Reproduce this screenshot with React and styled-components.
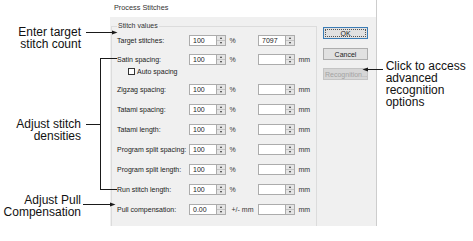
import React from 'react';
import styled, { createGlobalStyle } from 'styled-components';

const GlobalStyle = createGlobalStyle`
  html, body {
    margin: 0;
    padding: 0;
    background: #fff;
  }
  body {
    font-family: 'Liberation Sans', Arial, sans-serif;
  }
`;

const rows = [
  { label: 'Satin spacing:', gap: 7 },
  { label: 'Zigzag spacing:', gap: 7 },
  { label: 'Tatami spacing:' },
  { label: 'Tatami length:' },
  { label: 'Program split spacing:' },
  { label: 'Program split length:' },
  { label: 'Run stitch length:' },
];

const Spinner = ({ value }) => (
  <Spin>
    <Box>{value}</Box>
    <Arrows>
      <Half><Tri /></Half>
      <Half><Tri $down /></Half>
    </Arrows>
  </Spin>
);

const StitchRow = ({ label, gap }) => (
  <Row $gap={gap}>
    <RowLabel>{label}</RowLabel>
    <Spinner value="100" />
    <Unit $w={32}>%</Unit>
    <Spinner />
    <Unit>mm</Unit>
  </Row>
);

const App = () => {
  return (
    <Page>
      <GlobalStyle />
      <LeftNotes>
        <Note $top={26.3}>Enter target<br />stitch count</Note>
        <Note $top={67.7}>Adjust stitch<br />densities</Note>
        <Note $top={52}>Adjust Pull<br />Compensation</Note>
      </LeftNotes>

      <Dialog>
        <TitleBar>Process Stitches</TitleBar>
        <Body>
          <Group>
            <Legend>Stitch values</Legend>
            <Row $gap={4}>
              <RowLabel>Target stitches:</RowLabel>
              <Spinner value="100" />
              <Unit $w={32}>%</Unit>
              <Spinner value="7097" />
            </Row>
            <StitchRow {...rows[0]} />
            <CheckRow>
              <Check />
              <CheckLabel>Auto spacing</CheckLabel>
            </CheckRow>
            {rows.slice(1).map((r) => (
              <StitchRow key={r.label} {...r} />
            ))}
            <Row>
              <RowLabel>Pull compensation:</RowLabel>
              <Spinner value="0.00" />
              <Unit $w={32} $pad={5.5}>+/- mm</Unit>
              <Spinner />
              <Unit>mm</Unit>
            </Row>
          </Group>

          <Buttons>
            <Button $focus>OK</Button>
            <Button $mt={9}>Cancel</Button>
            <Button $mt={8} disabled>Recognition...</Button>
          </Buttons>
        </Body>
      </Dialog>

      <RightNote>Click to access<br />advanced<br />recognition<br />options</RightNote>

      <Callouts width="473" height="241" viewBox="0 0 473 241">
        <g stroke="#1a1a1a" strokeWidth="1" fill="none">
          <path d="M86 32.5 H113" />
          <path d="M86 124.5 H100.5 M100.5 58.5 V190 M100 58.5 H117 M100 189.5 H117" />
          <path d="M83 204.5 H111" />
          <path d="M367 69.5 H383" />
        </g>
        <g fill="#1a1a1a">
          <polygon points="117.5,32.5 112,30.5 112,34.5" />
          <polygon points="115.5,204.5 110,202.5 110,206.5" />
          <polygon points="362.5,69.5 368,67.5 368,71.5" />
        </g>
      </Callouts>
    </Page>
  );
};

// Styled-components
const Page = styled.div`
  position: relative;
  display: flex;
  align-items: flex-start;
  width: 473px;
  height: 241px;
  overflow: hidden;
  background: #fff;
`;

const LeftNotes = styled.div`
  flex: 0 0 110px;
  display: flex;
  flex-direction: column;
`;

const Note = styled.div`
  margin-top: ${(p) => p.$top}px;
  padding-right: 29px;
  text-align: right;
  font-size: 12px;
  line-height: 12px;
  color: #111;
`;

const Dialog = styled.div`
  box-sizing: border-box;
  flex: 0 0 267px;
  display: flex;
  flex-direction: column;
  border-right: 1px solid #cdcdcd;
`;

const TitleBar = styled.div`
  height: 17px;
  box-sizing: border-box;
  padding: 3px 0 0 4px;
  background: #fff;
  font-size: 7.3px;
  line-height: 9px;
  color: #333;
`;

const Body = styled.div`
  height: 209px;
  display: flex;
  align-items: flex-start;
  padding-left: 1px;
  background: #f0f0f0;
  overflow: hidden;
`;

const Group = styled.fieldset`
  box-sizing: border-box;
  width: 206px;
  height: 215px;
  min-width: 0;
  margin: 5px 0 0 0;
  padding: 0 0 0 5px;
  border: 1px solid #dcdcdc;
  display: flex;
  flex-direction: column;
`;

const Legend = styled.legend`
  padding: 0 1px;
  font-size: 7px;
  line-height: 8px;
  color: #333;
`;

const Row = styled.div`
  display: flex;
  align-items: center;
  height: 12px;
  margin-top: ${(p) => (p.$gap !== undefined ? p.$gap : 8)}px;
`;

const RowLabel = styled.span`
  flex: 0 0 72px;
  font-size: 7px;
  color: #222;
  white-space: nowrap;
`;

const Spin = styled.div`
  display: flex;
  flex: 0 0 37px;
  height: 11px;
`;

const Box = styled.div`
  box-sizing: border-box;
  width: 28px;
  height: 11px;
  padding-left: 3px;
  border: 1px solid #acacac;
  background: #fff;
  font-size: 7px;
  line-height: 9px;
  color: #222;
`;

const Arrows = styled.div`
  box-sizing: border-box;
  width: 9px;
  height: 11px;
  border: 1px solid #acacac;
  border-left: none;
  background: #e4e4e4;
  display: flex;
  flex-direction: column;
`;

const Half = styled.div`
  flex: 1;
  display: flex;
  align-items: center;
  justify-content: center;
  & + & {
    border-top: 1px solid #c4c4c4;
  }
`;

const Tri = styled.span`
  width: 0;
  height: 0;
  border-left: 1.5px solid transparent;
  border-right: 1.5px solid transparent;
  ${(p) =>
    p.$down
      ? 'border-top: 2px solid #333;'
      : 'border-bottom: 2px solid #333;'}
`;

const Unit = styled.span`
  flex: 0 0 ${(p) => (p.$w ? `${p.$w}px` : 'auto')};
  box-sizing: border-box;
  padding-left: ${(p) => p.$pad || 3.5}px;
  font-size: 7px;
  color: #333;
  white-space: nowrap;
`;

const CheckRow = styled.div`
  display: flex;
  align-items: center;
  height: 10px;
  margin-top: 1px;
  padding-left: 11px;
`;

const Check = styled.span`
  box-sizing: border-box;
  width: 7px;
  height: 7px;
  border: 1px solid #333;
  background: #fff;
`;

const CheckLabel = styled.span`
  margin-left: 2px;
  font-size: 7px;
  color: #222;
`;

const Buttons = styled.div`
  display: flex;
  flex-direction: column;
  margin: 10px 0 0 6px;
`;

const Button = styled.button`
  position: relative;
  box-sizing: border-box;
  width: 45px;
  height: 12px;
  margin: ${(p) => p.$mt || 0}px 0 0 0;
  padding: 0 1px;
  display: flex;
  align-items: center;
  justify-content: safe center;
  overflow: hidden;
  white-space: nowrap;
  font-family: 'Liberation Sans', Arial, sans-serif;
  font-size: 7px;
  color: #222;
  background: #e1e1e1;
  border: 1px solid ${(p) => (p.$focus ? '#3b7cb5' : '#adadad')};
  border-radius: 0;

  ${(p) =>
    p.$focus &&
    `&::after {
      content: '';
      position: absolute;
      inset: 1px;
      border: 1px dotted #555;
    }`}

  &:disabled {
    color: #a3a3a3;
    background: #d6d6d6;
    border-color: #c4c4c4;
  }
`;

const RightNote = styled.div`
  margin-top: 59.7px;
  padding-left: 8.7px;
  font-size: 12px;
  line-height: 12px;
  color: #111;
`;

const Callouts = styled.svg`
  position: absolute;
  left: 0;
  top: 0;
  pointer-events: none;
`;

export default App;
